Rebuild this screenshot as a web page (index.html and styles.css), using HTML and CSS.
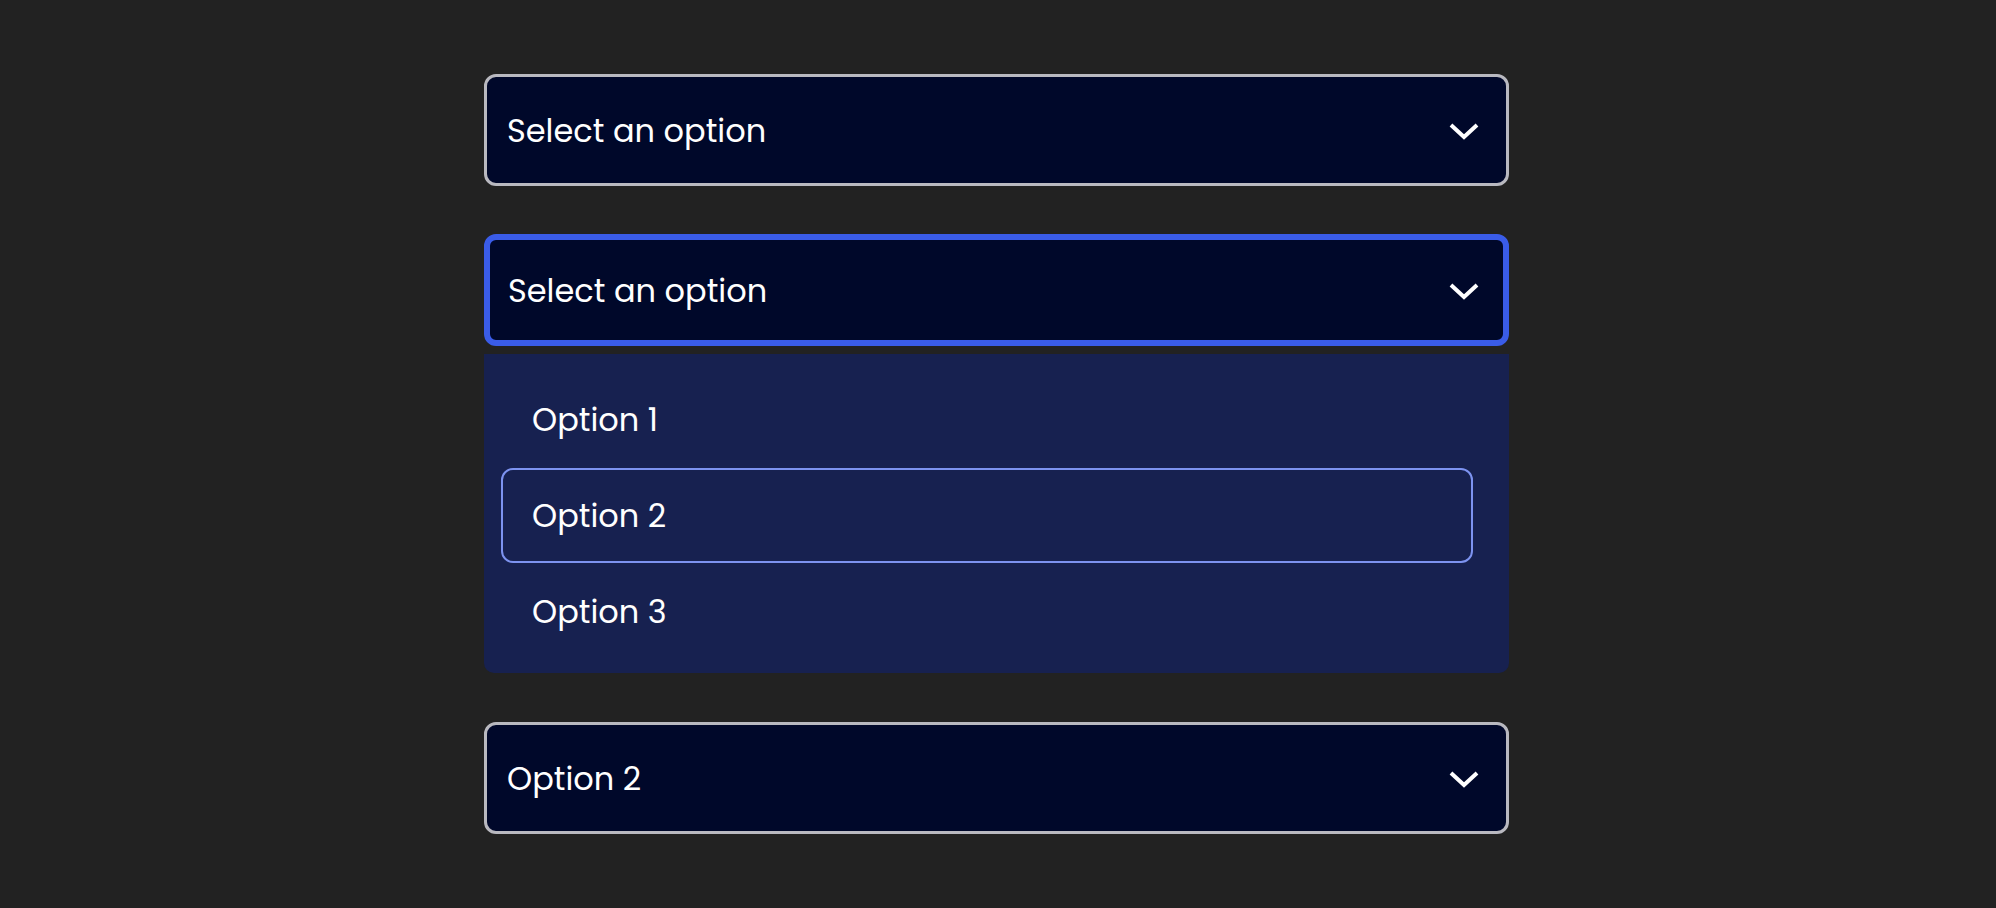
FILE: index.html
```html
<!DOCTYPE html>
<html lang="en">
<head>
<meta charset="utf-8">
<title>Select</title>
<link rel="stylesheet" href="styles.css">
</head>
<body>
<main class="stack">
  <div class="select">
    <span class="select-label">Select an option</span>
    <svg class="chevron" width="30" height="18" viewBox="0 0 30 18"><polyline points="2,3 15,15 28,3" fill="none" stroke="#fff" stroke-width="4" stroke-linejoin="miter"/></svg>
  </div>

  <div class="group">
    <div class="select select-focused">
      <span class="select-label">Select an option</span>
      <svg class="chevron" width="30" height="18" viewBox="0 0 30 18"><polyline points="2,3 15,15 28,3" fill="none" stroke="#fff" stroke-width="4" stroke-linejoin="miter"/></svg>
    </div>
    <ul class="listbox">
      <li class="option">Option 1</li>
      <li class="option option-active">Option 2</li>
      <li class="option">Option 3</li>
    </ul>
  </div>

  <div class="select">
    <span class="select-label">Option 2</span>
    <svg class="chevron" width="30" height="18" viewBox="0 0 30 18"><polyline points="2,3 15,15 28,3" fill="none" stroke="#fff" stroke-width="4" stroke-linejoin="miter"/></svg>
  </div>
</main>
</body>
</html>
```

FILE: styles.css
```css
html, body {
  margin: 0;
  padding: 0;
  background: #222222;
}

body {
  font-family: "Poppins", "Open Sans", "DejaVu Sans", sans-serif;
  color: #ffffff;
}

.stack {
  width: 1025px;
  margin-left: 484px;
  padding-top: 74px;
  display: flex;
  flex-direction: column;
  gap: 48px;
}

.group {
  display: flex;
  flex-direction: column;
  gap: 8px;
  margin-bottom: 1px;
}

.select {
  box-sizing: border-box;
  height: 112px;
  display: flex;
  align-items: center;
  justify-content: space-between;
  background: #00082a;
  border: 3px solid #b9b9c0;
  border-radius: 12px;
  padding: 2px 27px 0 20px;
}

.select-focused {
  border: 6px solid #3a5ce8;
  padding: 1px 24px 0 18px;
}

.select-label {
  font-size: 32px;
  line-height: 1;
}

.chevron {
  display: block;
  flex: none;
}

.listbox {
  list-style: none;
  margin: 0;
  background: #172150;
  border-radius: 0 0 10px 10px;
  padding: 18px 36px 14px 17px;
  display: flex;
  flex-direction: column;
  gap: 1px;
}

.option {
  box-sizing: border-box;
  height: 95px;
  display: flex;
  align-items: center;
  padding: 0 0 0 29px;
  border: 2px solid transparent;
  border-radius: 12px;
  font-size: 32px;
}

.option-active {
  border-color: #7d93f0;
}
```
